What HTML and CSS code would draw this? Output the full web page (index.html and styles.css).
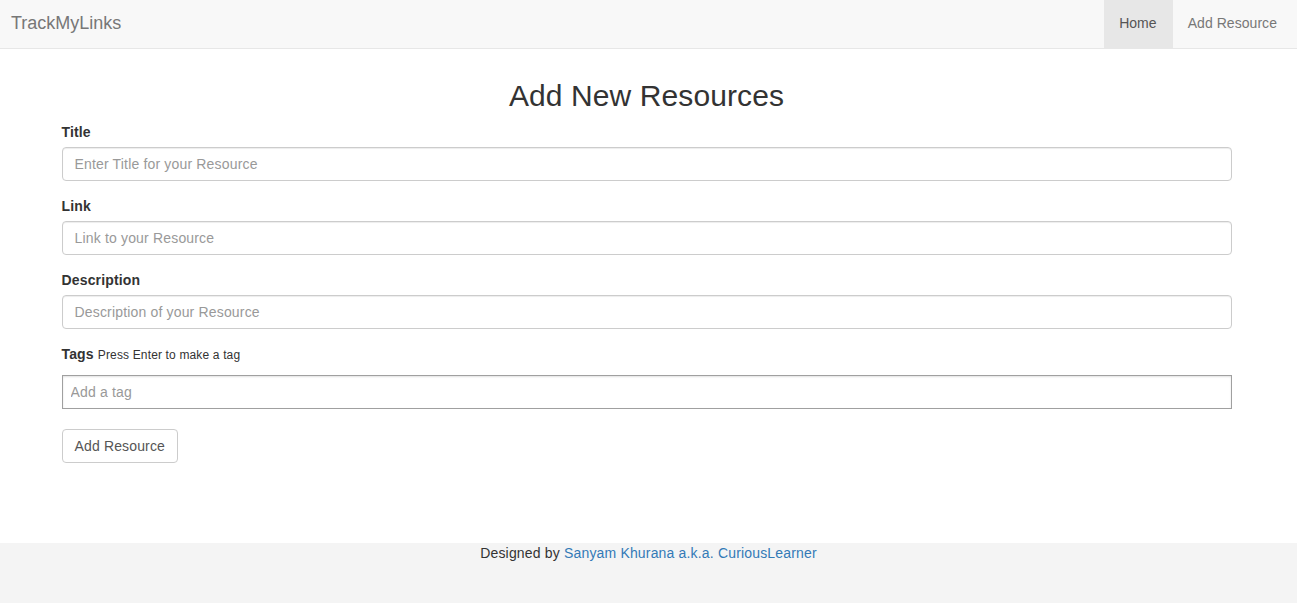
FILE: index.html
```html
<!DOCTYPE html>
<html lang="en">
<head>
<meta charset="utf-8">
<title>TrackMyLinks</title>
<link rel="stylesheet" href="styles.css">
</head>
<body>
<nav class="navbar">
  <a class="brand" href="#">TrackMyLinks</a>
  <ul class="nav">
    <li><a class="nav-link active" href="#">Home</a></li>
    <li><a class="nav-link" href="#">Add Resource</a></li>
  </ul>
</nav>
<main class="container">
  <h2 class="page-title">Add New Resources</h2>
  <form class="form">
    <div class="form-group">
      <label class="label">Title</label>
      <input class="form-control" type="text" placeholder="Enter Title for your Resource">
    </div>
    <div class="form-group">
      <label class="label">Link</label>
      <input class="form-control" type="text" placeholder="Link to your Resource">
    </div>
    <div class="form-group">
      <label class="label">Description</label>
      <input class="form-control" type="text" placeholder="Description of your Resource">
    </div>
    <div class="form-group tags-group">
      <label class="label">Tags <small class="hint">Press Enter to make a tag</small></label>
      <input class="tag-input" type="text" placeholder="Add a tag">
    </div>
    <button class="btn" type="button">Add Resource</button>
  </form>
</main>
<footer class="footer">
  Designed by <a class="footer-link" href="#">Sanyam Khurana a.k.a. CuriousLearner</a>
</footer>
</body>
</html>
```
FILE: styles.css
```css
* { box-sizing: border-box; }
html, body { margin: 0; padding: 0; }
body {
  font-family: "Liberation Sans", Arial, sans-serif;
  font-size: 14px;
  line-height: 20px;
  color: #333;
  background: #fff;
  letter-spacing: 0.15px;
}
a { text-decoration: none; }

.navbar {
  display: flex;
  justify-content: space-between;
  align-items: stretch;
  height: 49px;
  background: #f8f8f8;
  border-bottom: 1px solid #e7e7e7;
}
.brand {
  padding: 0 11px;
  font-size: 18px;
  line-height: 46px;
  color: #777;
  letter-spacing: 0;
}
.nav {
  display: flex;
  list-style: none;
  margin: 0;
  padding: 0;
}
.nav-link {
  display: block;
  padding: 0 20px 0 15px;
  line-height: 46px;
  height: 48px;
  color: #777;
  letter-spacing: 0.05px;
}
.nav-link.active {
  padding: 0 16px 0 15px;
  background: #e7e7e7;
  color: #555;
}

.container {
  width: 1174px;
  padding-right: 4px;
  margin: 0 auto;
}
.page-title {
  margin: 30px 0 10px;
  font-size: 30px;
  font-weight: 500;
  line-height: 33px;
  text-align: center;
  letter-spacing: 0.1px;
}
.form-group { margin-bottom: 15px; }
.label {
  display: block;
  font-weight: bold;
  margin-bottom: 5px;
}
.hint {
  font-size: 12px;
  font-weight: normal;
}
.form-control {
  display: block;
  width: 100%;
  height: 34px;
  padding: 6px 12px;
  font-family: inherit;
  font-size: 14px;
  letter-spacing: 0.17px;
  color: #555;
  background: #fff;
  border: 1px solid #ccc;
  border-radius: 4px;
  box-shadow: inset 0 1px 1px rgba(0,0,0,.075);
}
.form-control::placeholder, .tag-input::placeholder { color: #999; }
.tags-group { margin-bottom: 20px; }
.tags-group .label { margin-bottom: 10px; }
.tag-input {
  display: block;
  width: 100%;
  height: 34px;
  padding: 4px 8px;
  font-family: inherit;
  font-size: 14px;
  letter-spacing: 0.17px;
  border: 1px solid #a0a0a0;
  border-radius: 0;
  box-shadow: inset 0 1px 2px rgba(0,0,0,.12);
}
.btn {
  display: inline-block;
  height: 34px;
  padding: 6px 12px;
  font-family: inherit;
  font-size: 14px;
  letter-spacing: 0.15px;
  color: #555;
  background: #fff;
  border: 1px solid #ccc;
  border-radius: 4px;
}

.footer {
  margin-top: 80px;
  height: 60px;
  background: #f4f4f4;
  text-align: center;
  line-height: 20px;
  color: #333;
  letter-spacing: 0.17px;
}
.footer-link { color: #337ab7; }
```
